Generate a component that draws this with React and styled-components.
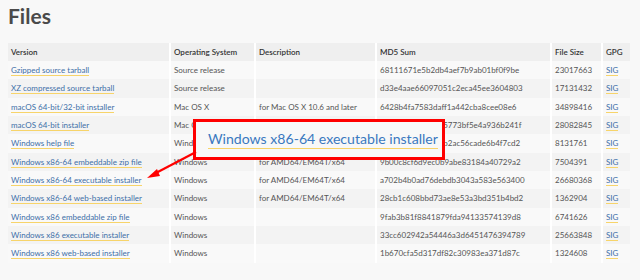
import React from 'react';
import styled, { createGlobalStyle } from 'styled-components';

const GlobalStyle = createGlobalStyle`
  html, body {
    margin: 0;
    padding: 0;
    background: #f8f8f8;
  }
  body {
    font-family: Lato, "Open Sans", sans-serif;
    color: #555;
  }
`;

const Page = styled.div`
  position: relative;
  width: 640px;
  height: 280px;
  padding: 0 8px;
  box-sizing: border-box;
  overflow: hidden;
`;

const Title = styled.h2`
  margin: 0;
  padding-top: 4px;
  height: 39px;
  font-size: 21px;
  font-weight: 700;
  color: #4a4a4a;
  line-height: 24px;
`;

const Table = styled.table`
  width: 622px;
  border-collapse: collapse;
  table-layout: fixed;
  font-size: 8px;
`;

const Th = styled.th`
  text-align: left;
  font-weight: 600;
  color: #333;
  background: #efefef;
  height: 18px;
  padding: 0 0 0 3px;
  border-right: 2px solid #fff;
  &:last-child { border-right: none; }
`;

const Tr = styled.tr`
  background: ${({ $odd }) => ($odd ? '#f3f3f3' : '#f9f9f9')};
`;

const Td = styled.td`
  height: 18.33px;
  padding: 0 0 0 3px;
  white-space: nowrap;
  overflow: hidden;
  border-right: 2px solid #fff;
  &:last-child { border-right: none; }
`;

const Link = styled.a`
  color: #3d6fa8;
  text-decoration: none;
  border-bottom: 1px solid #f7d46a;
`;

const Callout = styled.div`
  position: absolute;
  left: 193px;
  top: 119px;
  width: 252px;
  height: 41px;
  box-sizing: border-box;
  border: 3px solid #f00;
  background: #f8f8f8;
  display: flex;
  align-items: center;
  padding-left: 12px;
`;

const CalloutLink = styled.span`
  font-size: 14.1px;
  color: #3a78c0;
  border-bottom: 1px solid #f7d46a;
  line-height: 18px;
  white-space: nowrap;
`;

const Arrow = styled.svg`
  position: absolute;
  left: 140px;
  top: 145px;
`;

const files = [
  ['Gzipped source tarball', 'Source release', '', '68111671e5b2db4aef7b9ab01bf0f9be', '23017663'],
  ['XZ compressed source tarball', 'Source release', '', 'd33e4aae66097051c2eca45ee3604803', '17131432'],
  ['macOS 64-bit/32-bit installer', 'Mac OS X', 'for Mac OS X 10.6 and later', '6428b4fa7583daff1a442cba8cee08e6', '34898416'],
  ['macOS 64-bit installer', 'Mac OS X', 'for OS X 10.9 and later', '5dd605c38217a45773bf5e4a936b241f', '28082845'],
  ['Windows help file', 'Windows', '', 'd63999573a2c06b2ac56cade6b4f7cd2', '8131761'],
  ['Windows x86-64 embeddable zip file', 'Windows', 'for AMD64/EM64T/x64', '9b00c8cf6d9ec0b9abe83184a40729a2', '7504391'],
  ['Windows x86-64 executable installer', 'Windows', 'for AMD64/EM64T/x64', 'a702b4b0ad76debdb3043a583e563400', '26680368'],
  ['Windows x86-64 web-based installer', 'Windows', 'for AMD64/EM64T/x64', '28cb1c608bbd73ae8e53a3bd351b4bd2', '1362904'],
  ['Windows x86 embeddable zip file', 'Windows', '', '9fab3b81f8841879fda94133574139d8', '6741626'],
  ['Windows x86 executable installer', 'Windows', '', '33cc602942a54446a3d6451476394789', '25663848'],
  ['Windows x86 web-based installer', 'Windows', '', '1b670cfa5d317df82c30983ea371d87c', '1324608'],
];

const App = () => (
  <Page>
    <GlobalStyle />
    <Title>Files</Title>
    <Table>
      <colgroup>
        <col style={{ width: 162 }} />
        <col style={{ width: 85 }} />
        <col style={{ width: 121 }} />
        <col style={{ width: 175 }} />
        <col style={{ width: 51 }} />
        <col style={{ width: 28 }} />
      </colgroup>
      <thead>
        <tr>
          <Th>Version</Th>
          <Th>Operating System</Th>
          <Th>Description</Th>
          <Th>MD5 Sum</Th>
          <Th>File Size</Th>
          <Th>GPG</Th>
        </tr>
      </thead>
      <tbody>
        {files.map((f, i) => (
          <Tr key={f[0]} $odd={i % 2 === 1}>
            <Td><Link href="#">{f[0]}</Link></Td>
            <Td>{f[1]}</Td>
            <Td>{f[2]}</Td>
            <Td>{f[3]}</Td>
            <Td>{f[4]}</Td>
            <Td><Link href="#">SIG</Link></Td>
          </Tr>
        ))}
      </tbody>
    </Table>
    <Callout>
      <CalloutLink>Windows x86-64 executable installer</CalloutLink>
    </Callout>
    <Arrow width="60" height="40" viewBox="0 0 60 40">
      <line x1="56" y1="7" x2="14" y2="29" stroke="#f00" strokeWidth="2.2" />
      <polygon points="7,33 17,24 20,31" fill="#f00" />
    </Arrow>
  </Page>
);

export default App;
